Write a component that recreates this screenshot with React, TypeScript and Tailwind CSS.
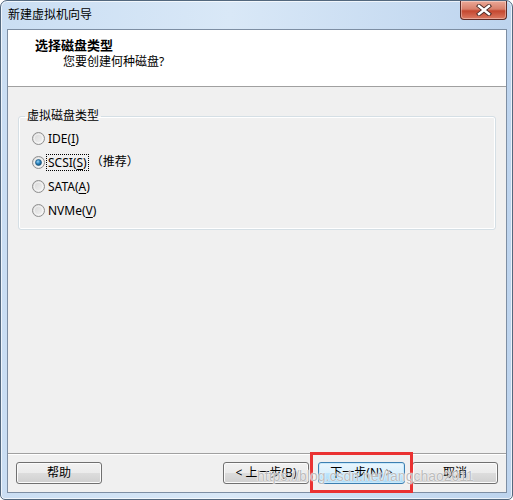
import type { ReactNode } from 'react'

const FONT = "font-['Noto_Sans','Noto_Sans_CJK_SC',sans-serif]"

const Radio = ({ checked }: { checked?: boolean }) => (
  <svg width="13" height="13" viewBox="0 0 13 13" className="shrink-0">
    <defs>
      <linearGradient id="rbFill" x1="0" y1="0" x2="1" y2="1">
        <stop offset="0" stopColor="#d4d4d4" />
        <stop offset="1" stopColor="#f6f6f6" />
      </linearGradient>
      <radialGradient id="rbDot" cx="0.4" cy="0.35" r="0.7">
        <stop offset="0" stopColor="#9ad5f5" />
        <stop offset="0.5" stopColor="#2b84c0" />
        <stop offset="1" stopColor="#10496f" />
      </radialGradient>
    </defs>
    <circle cx="6.5" cy="6.5" r="6" fill="url(#rbFill)" stroke="#8f8f8f" />
    <circle cx="6.5" cy="6.5" r="4.3" fill="none" stroke="#ffffff" strokeOpacity="0.6" />
    {checked ? <circle cx="6.5" cy="6.5" r="3" fill="url(#rbDot)" stroke="#1b5478" strokeWidth="0.6" /> : null}
  </svg>
)

const Option = ({
  label,
  accel,
  checked,
  extra
}: {
  label: string
  accel: string
  checked?: boolean
  extra?: ReactNode
}) => (
  <div className="flex h-[24px] items-center">
    <Radio checked={checked} />
    <span
      className={
        checked
          ? 'ml-[2px] px-[1px] leading-[15px] outline outline-1 outline-dotted outline-black'
          : 'ml-[3px] leading-[15px]'
      }
    >
      {label}(<span className="underline underline-offset-2">{accel}</span>)
    </span>
    {extra}
  </div>
)

const WinButton = ({ children, primary }: { children: ReactNode; primary?: boolean }) => (
  <button
    type="button"
    className={
      primary
        ? 'h-[22px] w-[87px] rounded-[3px] border border-[#3c7fb1] bg-[linear-gradient(to_bottom,#eaf6fd_0%,#d9f0fc_50%,#bee6fd_50%,#a7d9f5_100%)] text-[12px] leading-none text-black shadow-[inset_0_0_0_1px_#c8e9fb]'
        : 'h-[22px] w-[86px] rounded-[3px] border border-[#707070] bg-[linear-gradient(to_bottom,#f2f2f2_0%,#ebebeb_50%,#dddddd_50%,#cfcfcf_100%)] text-[12px] leading-none text-black shadow-[inset_0_0_0_1px_#fbfbfb]'
    }
  >
    {children}
  </button>
)

const CloseButton = () => (
  <div className="flex h-[19px] w-[47px] items-center justify-center rounded-b-[4px] border border-t-0 border-[#5e2b26] bg-[linear-gradient(to_bottom,#eba897_0%,#d8806b_45%,#c4472f_55%,#dc7a63_100%)] shadow-[inset_0_0_0_1px_rgba(255,255,255,0.35)]">
    <svg width="16" height="12" viewBox="0 0 16 12">
      <path d="M3 2 L13 10 M13 2 L3 10" stroke="#4a2a26" strokeWidth="4.2" strokeLinecap="square" />
      <path d="M3 2 L13 10 M13 2 L3 10" stroke="#ffffff" strokeWidth="2.4" strokeLinecap="square" />
    </svg>
  </div>
)

export default function App() {
  return (
    <div className={`relative h-[500px] w-[513px] bg-white ${FONT} text-[12px] text-black`}>
      <div className="flex h-[500px] w-[513px] flex-col rounded-t-[7px] rounded-b-[5px] border border-[#53687e] bg-[linear-gradient(to_right,#cadef3_0%,#d9e8f7_45%,#bdd4ee_100%)] shadow-[inset_0_0_0_1px_rgba(255,255,255,0.7)]">
        {/* title bar */}
        <div className="flex h-[28px] shrink-0 items-start justify-between pl-[7px] pr-[5px]">
          <span className="mt-[6px] leading-[16px]">新建虚拟机向导</span>
          <CloseButton />
        </div>

        {/* client area */}
        <div className="ml-[6px] mr-[5px] mb-[6px] flex flex-1 flex-col border border-[#7d8ea3] bg-[#f0f0f0]">
          <div className="h-[57px] shrink-0 border-b border-[#a0a0a0] bg-white pl-[27px] pt-[7px]">
            <div className="text-[13px] font-bold leading-[16px]">选择磁盘类型</div>
            <div className="mt-[1px] pl-[28px] leading-[16px]">您要创建何种磁盘?</div>
          </div>

          <div className="flex flex-1 flex-col">
            <fieldset className="mx-[10px] mt-[21px] rounded-[3px] border border-[#d5dfe5] p-0 shadow-[inset_0_0_0_1px_#ffffff]">
              <legend className="ml-[6px] px-[2px] leading-[16px]">虚拟磁盘类型</legend>
              <div className="pb-[7px] pl-[13px] pt-[2px]">
                <Option label="IDE" accel="I" />
                <Option label="SCSI" accel="S" checked extra={<span className="ml-[3px]">（推荐）</span>} />
                <Option label="SATA" accel="A" />
                <Option label="NVMe" accel="V" />
              </div>
            </fieldset>
            <div className="flex-1" />
          </div>

          <div className="shrink-0 border-t border-[#a0a0a0] shadow-[inset_0_1px_0_#ffffff]">
            <div className="flex items-center pb-[8px] pl-[8px] pr-[8px] pt-[8px]">
              <WinButton>帮助</WinButton>
              <div className="flex-1" />
              <WinButton>&lt; 上一步(B)</WinButton>
              <div className="w-[9px]" />
              <WinButton primary>下一步(N) &gt;</WinButton>
              <div className="w-[7px]" />
              <WinButton>取消</WinButton>
            </div>
          </div>
        </div>
      </div>

      {/* annotation box */}
      <div className="pointer-events-none absolute left-[310px] top-[452px] h-[41px] w-[103px] border-[3px] border-[#ea3232]" />

      {/* watermark */}
      <div className="pointer-events-none absolute left-[257px] top-[467px] font-['Liberation_Sans',sans-serif] text-[14px] leading-[18px] text-[#b4b4b4]/90 [text-shadow:0_0_1px_#ffffff,0_0_2px_#ffffff]">
        https://blog.csdn.net/fangchao2011
      </div>
    </div>
  )
}
